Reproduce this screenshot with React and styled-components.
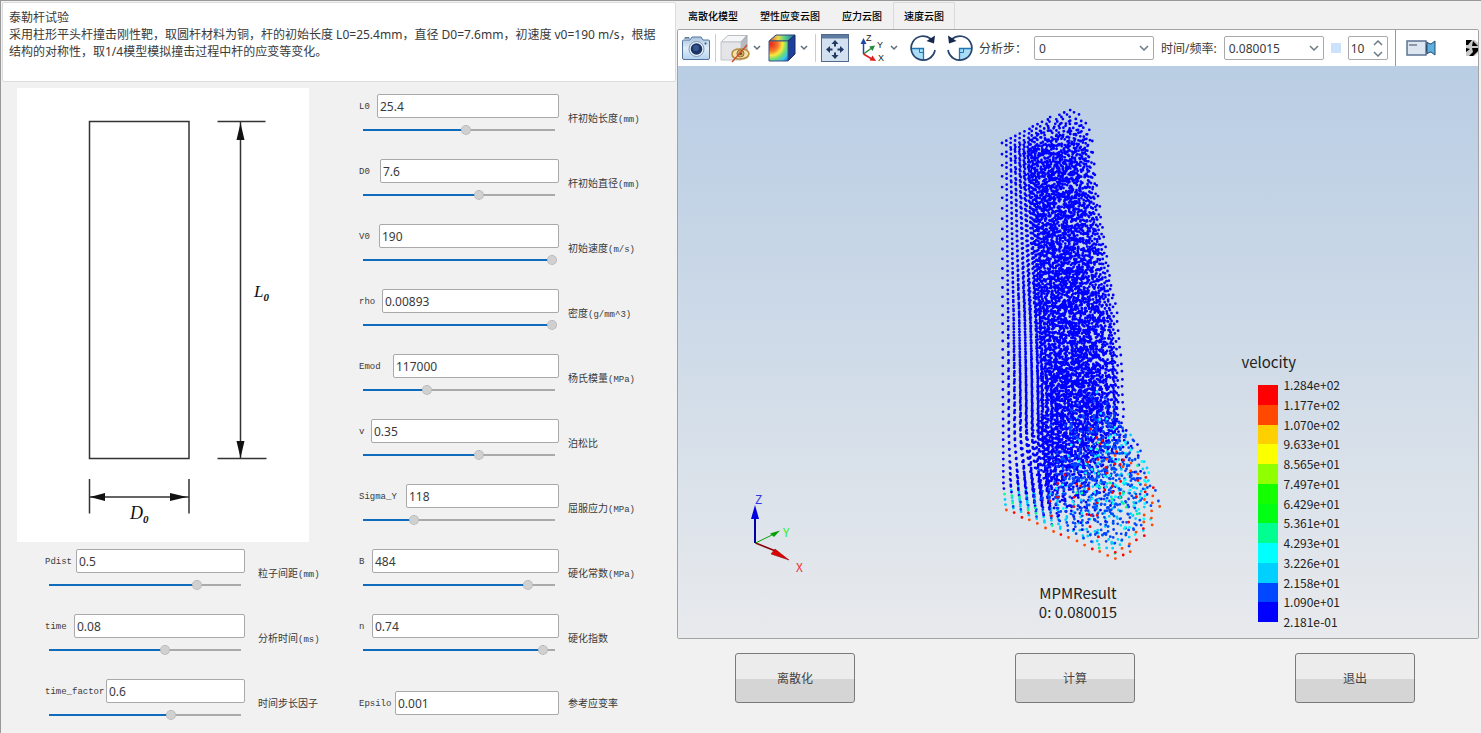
import React, { useMemo, useState } from "react";
import styled, { createGlobalStyle } from "styled-components";

const GlobalStyle = createGlobalStyle
`
    * {
        box-sizing: border-box;
    }

    body {
        margin: 0;
        background: #f1f1f1;
        color: #3a3a3a;
        font-family: 'Noto Sans', 'Noto Sans CJK SC', sans-serif;
        font-size: 12px;
    }

    button, input, select {
        font: inherit;
        color: inherit;
    }
`

const Page = styled.div
`
    display: flex;
    min-height: 100vh;
    border-top: 1px solid #999;
    border-left: 1px solid #999;
`

const Sidebar = styled.section
`
    flex: 0 0 676px;
`

const Intro = styled.div
`
    margin: 1px 1px 0;
    padding: 6px 16px 21px 6px;
    background: white;
    border: 1px solid #dcdcdc;
    border-radius: 2px;
`

const IntroText = styled.p
`
    margin: 0;
    line-height: 17px;
`

const Setup = styled.div
`
    display: grid;
    grid-template-columns: 342px 1fr;
    padding: 6px 0 0 16px;
`

const Sketch = styled.svg
`
    display: block;
    width: 292px;
    height: 454px;
    background: white;
`

const ParamList = styled.div
`
    display: flex;
    flex-direction: column;
    gap: 17px;
    padding: ${(props) => props.$inset ? "7px 0 0 28px" : "6px 0 0"};
`

const ParamRow = styled.div
`
    display: grid;
    grid-template-columns: 200px 1fr;
    align-items: center;
    column-gap: ${(props) => props.$wide ? 13 : 9}px;
    height: 48px;
`

const ParamInputs = styled.div
`
    display: flex;
    flex-direction: column;
`

const ParamLine = styled.div
`
    display: flex;
    align-items: center;
`

const ParamName = styled.label
`
    flex: none;
    width: ${(props) => props.$width}px;
    padding-top: 1px;
    font-family: 'Liberation Mono', monospace;
    font-size: 9px;
    line-height: 12px;
`

const ParamValue = styled.input
`
    flex: 1;
    min-width: 0;
    height: 24px;
    padding: 0 2px;
    background: white;
    border: 1px solid #a9a9a9;
    border-radius: 2px;
    outline: none;
`

const ParamSlider = styled.input
`
    appearance: none;
    height: 24px;
    margin: 0 2px;
    background:
        linear-gradient(to right, #0f6cbd var(--fill), #aaa var(--fill))
        center / calc(100% - 4px) 2px no-repeat;

    &::-webkit-slider-thumb {
        appearance: none;
        width: 10px;
        height: 10px;
        background: #d0d0d0;
        border: 1px dotted #aaa;
        border-radius: 50%;
    }
`

const ParamCaption = styled.span
`
    padding-top: 3px;
    font-family: 'Liberation Mono', 'Noto Sans CJK SC', monospace;
    font-size: 10px;
    line-height: 14px;
    white-space: nowrap;
`

const Unit = styled.small
`
    font-size: 9px;
`

const Main = styled.main
`
    flex: 1;
    min-width: 0;
    display: flex;
    flex-direction: column;
`

const Tabs = styled.nav
`
    display: flex;
    height: 28px;
    padding-top: 1px;
`

const Tab = styled.button
`
    padding: 0 11px;
    background: none;
    border: 1px solid ${(props) => props.$active ? "#dadada" : "transparent"};
    border-width: 1px 0 0;
    box-shadow: ${(props) => props.$active ? "inset 1px 0 #dadada, inset -1px 0 #dadada" : "none"};
    color: black;
    font-size: 10px;
    font-weight: 500;
    line-height: 14px;
`

const Viewer = styled.section
`
    flex: 1;
    display: flex;
    flex-direction: column;
    margin-right: 2px;
    border: 1px solid #a3a3a3;
    border-radius: 2px;
    overflow: hidden;
`

const Toolbar = styled.div
`
    display: flex;
    align-items: center;
    gap: 4px;
    height: 36px;
    padding-left: 3px;
    background: white;
    overflow: hidden;
`

const ToolGroup = styled.div
`
    display: flex;
    flex: none;
    align-items: center;
    gap: ${(props) => props.$gap}px;
`

const ToolButton = styled.button
`
    display: flex;
    flex: none;
    align-items: center;
    justify-content: center;
    width: 30px;
    height: 30px;
    padding: 0;
    background: none;
    border: none;

    svg {
        flex: none;
    }
`

const MenuButton = styled(ToolButton)
`
    width: 14px;
`

const ToolPair = styled.div
`
    display: flex;
`

const Separator = styled.span
`
    flex: none;
    width: 1px;
    height: ${(props) => props.$full ? 36 : 28}px;
    margin: ${(props) => props.$full ? "0 6px 0 3px" : "0"};
    background: ${(props) => props.$full ? "#999" : "#ccc"};
`

const ToolLabel = styled.label
`
    white-space: nowrap;
`

const SelectBox = styled.div
`
    position: relative;
    width: ${(props) => props.$width}px;
    height: 24px;

    svg {
        position: absolute;
        top: 9px;
        right: 5px;
        pointer-events: none;
    }
`

const Select = styled.select
`
    appearance: none;
    width: 100%;
    height: 24px;
    padding: 0 20px 0 4px;
    background: white;
    border: 1px solid #a9a9a9;
    border-radius: 2px;
`

const Swatch = styled.span
`
    width: 10px;
    height: 10px;
    background: #cce1fb;
`

const Spinner = styled.div
`
    display: flex;
    width: 40px;
    height: 24px;
    border: 1px solid #a9a9a9;
    border-radius: 2px;
`

const SpinnerValue = styled.input
`
    flex: 1;
    min-width: 0;
    padding: 0 0 0 2px;
    background: none;
    border: none;
    outline: none;
`

const SpinnerArrows = styled.div
`
    display: flex;
    flex-direction: column;
    width: 18px;
`

const SpinnerArrow = styled.button
`
    flex: 1;
    display: flex;
    align-items: center;
    justify-content: center;
    padding: 0;
    background: none;
    border: none;
`

const ClippedTool = styled(ToolButton)
`
    margin-left: auto;
    width: 13px;
    justify-content: flex-start;
`

const Viewport = styled.div
`
    position: relative;
    flex: 1;
    min-height: 400px;
    background: linear-gradient(#b9cde4, #cfdbe8 50%, #e8eaed);
    font-family: 'Noto Sans CJK SC', sans-serif;
    color: #222;
`

const Scene = styled.svg
`
    position: absolute;
    inset: 0;
    width: 100%;
    height: 100%;
`

const Triad = styled.svg
`
    position: absolute;
    left: 66px;
    bottom: 58px;
`

const Result = styled.p
`
    position: absolute;
    left: 0;
    right: 0;
    bottom: 17px;
    margin: 0;
    font-size: 15px;
    line-height: 19px;
    text-align: center;
`

const Legend = styled.div
`
    position: absolute;
    right: 138px;
    bottom: 6px;
`

const LegendTitle = styled.h2
`
    margin: 0 0 3px;
    font-size: 15px;
    font-weight: 400;
    line-height: 20px;
`

const LegendBody = styled.div
`
    display: flex;
    gap: 5px;
    padding-left: 17px;
`

const LegendBar = styled.div
`
    display: flex;
    flex-direction: column;
    width: 20px;
    height: 237px;
    margin: 10px 0;
`

const LegendColor = styled.span
`
    flex: 1;
    background: ${(props) => props.$color};
`

const LegendLabels = styled.div
`
    display: flex;
    flex-direction: column;
    justify-content: space-between;
    height: 253px;
    margin-top: 2px;
    font-size: 12px;
    line-height: 16px;
`

const Actions = styled.div
`
    display: flex;
    justify-content: space-between;
    padding: 14px 66px 30px 58px;
`

const ActionButton = styled.button
`
    width: 120px;
    height: 50px;
    background: linear-gradient(#ececec 52%, #d5d5d5 52%);
    border: 1px solid #7a7a7a;
    border-radius: 3px;
    color: #444;
`

const rodParams =
[
    { name: "L0", value: "25.4", label: 18, fill: 54, caption: "杆初始长度", unit: "(mm)" },
    { name: "D0", value: "7.6", label: 21, fill: 61, caption: "杆初始直径", unit: "(mm)" },
    { name: "V0", value: "190", label: 20, fill: 100, caption: "初始速度", unit: "(m/s)" },
    { name: "rho", value: "0.00893", label: 23, fill: 100, caption: "密度", unit: "(g/mm^3)" },
    { name: "Emod", value: "117000", label: 34, fill: 33, caption: "杨氏模量", unit: "(MPa)" },
    { name: "v", value: "0.35", label: 12, fill: 61, caption: "泊松比" },
    { name: "Sigma_Y", value: "118", label: 47, fill: 26, caption: "屈服应力", unit: "(MPa)" },
    { name: "B", value: "484", label: 13, fill: 87, caption: "硬化常数", unit: "(MPa)" },
    { name: "n", value: "0.74", label: 13, fill: 95, caption: "硬化指数" },
    { name: "Epsilo", value: "0.001", label: 36, caption: "参考应变率" },
];

const solverParams =
[
    { name: "Pdist", value: "0.5", label: 31, fill: 78, caption: "粒子间距", unit: "(mm)" },
    { name: "time", value: "0.08", label: 29, fill: 61, caption: "分析时间", unit: "(ms)" },
    { name: "time_factor", value: "0.6", label: 61, fill: 64, caption: "时间步长因子" },
];

const tabs = ["离散化模型", "塑性应变云图", "应力云图", "速度云图"];

const legendColors =
[
    "#ff0000", "#ff4800", "#ffd000", "#fbff00", "#90ff00", "#14ff00",
    "#00ff14", "#00ff90", "#00ffff", "#00d0ff", "#0048ff", "#0000ff",
];

const legendValues =
[
    "1.284e+02", "1.177e+02", "1.070e+02", "9.633e+01", "8.565e+01", "7.497e+01", "6.429e+01",
    "5.361e+01", "4.293e+01", "3.226e+01", "2.158e+01", "1.090e+01", "2.181e-01",
];

// Radial spread of the rod at a given height: [y, scale]
const profile =
[
    [77, 1], [109, 1.03], [162, 1.1], [182, 1.13], [222, 1.19], [249, 1.24], [284, 1.27],
    [314, 1.29], [356, 1.3], [374, 1.33], [386, 1.39], [396, 1.5], [410, 1.57], [442, 1.64],
];

function spreadAt(y)
{
    for (let i = 1; i < profile.length; i++)
    {
        const [y0, s0] = profile[i - 1];
        const [y1, s1] = profile[i];
        if (y <= y1) return s0 + (s1 - s0) * (y - y0) / (y1 - y0);
    }
    return profile[profile.length - 1][1];
}

function colorOf(depth, radius, front, random)
{
    if (depth === 0)
    {
        if (front || radius > 0.9) return random < 0.5 ? "#ff0000" : "#ff4800";
        if (random < 0.12) return "#ff0000";
        return random < 0.55 ? "#00d0ff" : "#0048ff";
    }
    if (depth < 4 && (front || radius < 0.2)) return random < 0.15 ? "#00ff90" : "#00d0ff";
    const heat = radius * 1.25 - depth * 0.06 - 0.25;
    if (random < heat * 0.05) return "#ff0000";
    if (random < heat * 0.1) return "#00ff90";
    if (random < heat * 0.28) return "#00ffff";
    if (random < heat * 0.6) return "#00d0ff";
    if (random < heat * 1.2 + (depth < 12 ? 0.25 : 0)) return "#0048ff";
    return "#0000ff";
}

// Quarter of the rod as a 15 x 15 grid of particles over 46 layers
function buildParticles()
{
    const paths = {};
    let seed = 7;
    const random = () =>
    {
        seed = (seed * 16807) % 2147483647;
        return seed / 2147483647;
    };

    for (let layer = 0; layer <= 45; layer++)
    {
        const depth = 45 - layer;
        const baseY = 77 + 11.3 * layer - 0.07 * layer * layer;
        const baseX = 324 + layer * 0.035 + (depth < 5 ? (5 - depth) * 0.5 : 0);
        const s = spreadAt(baseY);

        for (let i = 0; i < 15; i++)
        {
            for (let j = 0; j < 15; j++)
            {
                const radius = Math.sqrt(i * i + j * j) / 14.2;
                if (radius > 1) continue;

                const thin = depth > 0 && depth < 9 && radius > 0.45 && random() < 0.4;
                if (thin) continue;

                const edge = depth === 0 || radius > 0.93;
                const noise = edge ? 1 : Math.max(0, i + j - 5) * 0.7;
                // The core bulges towards the axis, the outer ring stays in place
                const crowd = Math.max(0, i + j - 6) * (1 - radius) * 2.2;
                const dx = 4.3 * i + (s - 1) * i * 0.9 + 4.3 * j + 0.04 * j * j - (depth < 5 ? 0 : crowd);
                const x = baseX + dx * (s > 1.3 ? s * 0.98 : s) + (random() - 0.5) * Math.min(noise, 6);
                const y = baseY + (2.15 * i - 2.35 * j) * s + (layer > 0 ? (random() - 0.5) * Math.min(noise * 1.6, 9) : 0);
                const color = colorOf(depth, radius, j === 0, random());
                paths[color] = (paths[color] || "") + `M${x.toFixed(1)} ${y.toFixed(1)}h.01`;
            }
        }
    }
    return Object.entries(paths);
}

const particleOrder = ["#00d0ff", "#0000ff", "#0048ff", "#00ffff", "#00ff90", "#ff4800", "#ff0000"];

function Particles()
{
    const paths = useMemo(() =>
        buildParticles().sort((a, b) => particleOrder.indexOf(a[0]) - particleOrder.indexOf(b[0])), []);

    return (
        <Scene viewBox="0 0 800 572" aria-label="velocity">
            {paths.map(([color, d]) =>
            (
                <path key={color} d={d} stroke={color} strokeWidth="2.8" strokeLinecap="round" fill="none"/>
            ))}
        </Scene>
    )
}

function Chevron({ up })
{
    return (
        <svg width="10" height="6" viewBox="0 0 10 6">
            <path d={up ? "M1 5L5 1L9 5" : "M1 1L5 5L9 1"} fill="none" stroke="#6b7c85" strokeWidth="1.5"/>
        </svg>
    )
}

function SmallChevron()
{
    return (
        <svg width="8" height="6" viewBox="0 0 8 6">
            <path d="M1 1L4 4L7 1" fill="none" stroke="#5c6f7c" strokeWidth="1.5"/>
        </svg>
    )
}

function CameraIcon()
{
    return (
        <svg width="28" height="24" viewBox="0 0 28 24">
            <defs>
                <linearGradient id="camera" x2="0" y2="1">
                    <stop offset="0" stopColor="#a9c2dd"/>
                    <stop offset="0.5" stopColor="#dfeefa"/>
                    <stop offset="1" stopColor="#b5d2ee"/>
                </linearGradient>
            </defs>
            <path d="M3 3V1.500H7V3" fill="#8fa8c4" stroke="#5d7a9e"/>
            <path d="M1.500 4H8L10 1H19L21 4H26.500Q27.500 4 27.500 5V22Q27.500 23.500 26 23.500H2Q.5 23.500 .5 22V5Q.5 4 1.500 4Z" fill="url(#camera)" stroke="#55749c"/>
            <circle cx="14.500" cy="13" r="7.500" fill="#eaf3fb" stroke="#7d98b8"/>
            <circle cx="14.500" cy="13" r="5.800" fill="#1c3566"/>
            <circle cx="14" cy="12" r="3" fill="#37588f"/>
            <circle cx="23.500" cy="7.500" r="1" fill="#33527e"/>
        </svg>
    )
}

function HiddenCubeIcon()
{
    return (
        <svg width="30" height="29" viewBox="0 0 30 29">
            <path d="M1 8L8 1.500H27L21 8Z" fill="#f5f6f7" stroke="#b9bec4"/>
            <path d="M21 8L27 1.500V19L21 26Z" fill="#b7bbc1" stroke="#a4a9b0"/>
            <path d="M1 8H21V26H1Z" fill="#e3e5e8" stroke="#c0c4c9"/>
            <path d="M12 20Q12 15 20 15Q29 15 29 20Q28 25 20 25Q12 25 12 20Z" fill="#f5dfaa" stroke="#b68a3c" strokeWidth="1.500"/>
            <circle cx="20.500" cy="19.500" r="3.500" fill="#d2ae64" stroke="#8c6a31"/>
            <circle cx="20.500" cy="19.500" r="1.500" fill="#5c4a30"/>
            <path d="M12 28L27 11" stroke="#cc4a2c" strokeWidth="1.300"/>
        </svg>
    )
}

function ContourCubeIcon()
{
    return (
        <svg width="28" height="28" viewBox="0 0 28 28">
            <defs>
                <radialGradient id="contour" gradientUnits="userSpaceOnUse" cx="3" cy="10" r="23">
                    <stop offset="0" stopColor="#e5281e"/>
                    <stop offset="0.3" stopColor="#f5762a"/>
                    <stop offset="0.5" stopColor="#f7ea3c"/>
                    <stop offset="0.68" stopColor="#69dc78"/>
                    <stop offset="0.85" stopColor="#38c5ee"/>
                    <stop offset="1" stopColor="#256be0"/>
                </radialGradient>
                <linearGradient id="contourTop">
                    <stop offset="0" stopColor="#d8412f"/>
                    <stop offset="0.35" stopColor="#e9dc4b"/>
                    <stop offset="0.65" stopColor="#49c88b"/>
                    <stop offset="1" stopColor="#2759b8"/>
                </linearGradient>
            </defs>
            <path d="M1 7L8 1H27L20 7Z" fill="url(#contourTop)" stroke="#29457a"/>
            <path d="M20 7L27 1V20L20 27Z" fill="#1d3f9e" stroke="#1b2c5c"/>
            <path d="M1 7H20V27H1Z" fill="url(#contour)" stroke="#3e5680"/>
        </svg>
    )
}

function FitIcon()
{
    return (
        <svg width="28" height="28" viewBox="0 0 28 28">
            <rect x="0.500" y="0.500" width="27" height="27" fill="#d3e0ef" stroke="#51698c"/>
            <path d="M1 1H27V4.500H1Z" fill="#5e7ba2"/>
            <path d="M14 6L17.500 10H15V12.500H13V10H10.500ZM14 25L10.500 21H13V18.500H15V21H17.500ZM5 15.500L9 12V14.500H11.500V16.500H9V19ZM23 15.500L19 19V16.500H16.500V14.500H19V12Z" fill="#1f3864"/>
        </svg>
    )
}

function AxesIcon()
{
    return (
        <svg width="26" height="30" viewBox="0 0 26 30" fontFamily="Liberation Sans, sans-serif" fontSize="9">
            <path d="M4.500 21V9" stroke="#1c48a8" strokeWidth="1.500"/>
            <path d="M4.500 5L7.500 11H1.500Z" fill="#1c48a8"/>
            <path d="M4.500 21L12 15.500" stroke="#218a3c" strokeWidth="1.500"/>
            <path d="M16 12.500L13.500 18L10.200 13.500Z" fill="#218a3c"/>
            <path d="M4.500 21L12 25.500" stroke="#e01e1e" strokeWidth="1.500"/>
            <path d="M17 28L10.500 27.500L13.500 22.500Z" fill="#e01e1e"/>
            <text x="7" y="8" fill="#222">Z</text>
            <text x="18" y="15" fill="#222">Y</text>
            <text x="19" y="28" fill="#222">X</text>
        </svg>
    )
}

function RotateIcon({ flipped })
{
    return (
        <svg width="28" height="28" viewBox="0 0 28 28">
            <g transform={flipped ? "translate(28 0) scale(-1 1)" : undefined}>
                <path d="M2 15H14V26.500Q4 26 2 15Z" fill="#a9dcf7"/>
                <path d="M2 14.500H14.500V26.500" fill="none" stroke="#1f78b4" strokeWidth="1.300"/>
                <path d="M10.500 15V18.500H14" fill="none" stroke="#1f78b4"/>
                <path d="M22 5A12 12 0 1 0 26 16" fill="none" stroke="#27456f" strokeWidth="1.700"/>
                <path d="M26 1.500L25 9.500L17.500 7Z" fill="#16294d"/>
            </g>
        </svg>
    )
}

function VideoIcon()
{
    return (
        <svg width="30" height="16" viewBox="0 0 30 16">
            <rect x="1" y="1" width="19" height="14" fill="#dce5f0" stroke="#5b7291" strokeWidth="1.500"/>
            <rect x="3" y="4" width="8" height="2" fill="#8c99aa"/>
            <path d="M20 4L23 6V10L20 12Z" fill="#33527e"/>
            <path d="M21 2Q23 4 25 4L29 1V15L25 12Q23 12 21 14Z" fill="#5fb0dc" stroke="#25486f"/>
        </svg>
    )
}

function ExportIcon()
{
    return (
        <svg width="24" height="18" viewBox="0 0 24 18">
            <path d="M1 1H10L13 4V14L10 17H1Z" fill="#c9c9c9"/>
            <path d="M1 1H7L3 6H1ZM8 2L13 7H7ZM1 9L5 10L1 13ZM7 9H13V12L8 17L4 17L8 13Z" fill="black"/>
        </svg>
    )
}

function RodSketch()
{
    return (
        <Sketch viewBox="0 0 292 454" fontFamily="Liberation Serif, serif" fontStyle="italic" fill="#111">
            <g fill="none" stroke="#333" strokeWidth="1.500">
                <rect x="72.500" y="33.500" width="99.500" height="337"/>
                <path d="M200.500 33.500H248.500M200.500 370.500H249.500M223.500 34V370"/>
                <path d="M72.500 391V425.500M172 391V425.500M73 409H172"/>
            </g>
            <path d="M223.500 35L227.500 52H219.500ZM223.500 370L219.500 353H227.500Z"/>
            <path d="M73 409L88 405V413ZM170 409L153 405V413Z"/>
            <text x="237" y="209" fontSize="17">L<tspan dy="4" fontSize="11" fontWeight="700">0</tspan></text>
            <text x="113" y="431" fontSize="18">D<tspan dy="4" fontSize="11" fontWeight="700">0</tspan></text>
        </Sketch>
    )
}

function AxisTriad()
{
    return (
        <Triad width="68" height="92" viewBox="0 -4 68 92" fontSize="12">
            <path d="M11.500 51L34 60" stroke="#8b0000" strokeWidth="1.500"/>
            <path d="M31 57L45 68L27 62Z" fill="#dd0000" stroke="#8b0000" strokeWidth="0.500"/>
            <path d="M11.500 51L28 43" stroke="#00a000"/>
            <path d="M36 38.500L30 45L26 41.500Z" fill="#00a000"/>
            <path d="M11 51V24" stroke="#0000a8" strokeWidth="2"/>
            <path d="M11 13L15 27H7Z" fill="#0000e0"/>
            <text x="11" y="12" fill="#3232e6">Z</text>
            <text x="39" y="45" fill="#28f028">Y</text>
            <text x="52" y="80" fill="#f03232">X</text>
        </Triad>
    )
}

function Param({ param, wide })
{
    const [value, setValue] = useState(param.value);
    const [fill, setFill] = useState(param.fill);
    const id = "param-" + param.name;

    return (
        <ParamRow $wide={wide}>
            <ParamInputs>
                <ParamLine>
                    <ParamName htmlFor={id} $width={param.label}>{param.name}</ParamName>
                    <ParamValue id={id} value={value} onChange={(e) => setValue(e.target.value)}/>
                </ParamLine>
                {fill !== undefined && (
                    <ParamSlider
                        type="range"
                        aria-label={param.caption}
                        value={fill}
                        onChange={(e) => setFill(Number(e.target.value))}
                        style={{ "--fill": fill + "%" }}
                    />
                )}
            </ParamInputs>
            <ParamCaption>{param.caption}{param.unit && <Unit>{param.unit}</Unit>}</ParamCaption>
        </ParamRow>
    )
}

export default function App()
{
    const [activeTab, setActiveTab] = useState("速度云图");
    const [count, setCount] = useState(10);

    return (
        <Page>
            <GlobalStyle/>
            <Sidebar>
                <Intro>
                    <IntroText>泰勒杆试验</IntroText>
                    <IntroText>
                        采用柱形平头杆撞击刚性靶，取圆杆材料为铜，杆的初始长度 L0=25.4mm，直径 D0=7.6mm，初速度 v0=190 m/s，根据结构的对称性，取1/4模型模拟撞击过程中杆的应变等变化。
                    </IntroText>
                </Intro>
                <Setup>
                    <div>
                        <RodSketch/>
                        <ParamList $inset>
                            {solverParams.map((param) => <Param key={param.name} param={param} wide/>)}
                        </ParamList>
                    </div>
                    <ParamList>
                        {rodParams.map((param) => <Param key={param.name} param={param}/>)}
                    </ParamList>
                </Setup>
            </Sidebar>

            <Main>
                <Tabs>
                    {tabs.map((tab) =>
                    (
                        <Tab key={tab} $active={tab === activeTab} onClick={() => setActiveTab(tab)}>{tab}</Tab>
                    ))}
                </Tabs>
                <Viewer>
                    <Toolbar>
                        <ToolButton aria-label="截图"><CameraIcon/></ToolButton>
                        <Separator/>
                        <ToolGroup $gap={3}>
                            <ToolPair>
                                <ToolButton aria-label="隐藏"><HiddenCubeIcon/></ToolButton>
                                <MenuButton aria-label="隐藏选项"><SmallChevron/></MenuButton>
                            </ToolPair>
                            <ToolPair>
                                <ToolButton aria-label="云图"><ContourCubeIcon/></ToolButton>
                                <MenuButton aria-label="云图选项"><SmallChevron/></MenuButton>
                            </ToolPair>
                        </ToolGroup>
                        <Separator/>
                        <ToolGroup $gap={7}>
                            <ToolButton aria-label="适应窗口"><FitIcon/></ToolButton>
                            <ToolPair>
                                <ToolButton aria-label="视角"><AxesIcon/></ToolButton>
                                <MenuButton aria-label="视角选项"><SmallChevron/></MenuButton>
                            </ToolPair>
                            <ToolButton aria-label="顺时针旋转"><RotateIcon/></ToolButton>
                            <ToolButton aria-label="逆时针旋转"><RotateIcon flipped/></ToolButton>
                        </ToolGroup>
                        <ToolGroup $gap={7}>
                            <ToolLabel htmlFor="step">分析步：</ToolLabel>
                            <SelectBox $width={120}>
                                <Select id="step"><option>0</option></Select>
                                <Chevron/>
                            </SelectBox>
                            <ToolLabel htmlFor="time-value">时间/频率:</ToolLabel>
                            <SelectBox $width={100}>
                                <Select id="time-value"><option>0.080015</option></Select>
                                <Chevron/>
                            </SelectBox>
                            <Swatch/>
                            <Spinner>
                                <SpinnerValue aria-label="帧数" value={count} onChange={(e) => setCount(Number(e.target.value) || 0)}/>
                                <SpinnerArrows>
                                    <SpinnerArrow aria-label="增加" onClick={() => setCount(count + 1)}><Chevron up/></SpinnerArrow>
                                    <SpinnerArrow aria-label="减少" onClick={() => setCount(count - 1)}><Chevron/></SpinnerArrow>
                                </SpinnerArrows>
                            </Spinner>
                        </ToolGroup>
                        <Separator $full/>
                        <ToolButton aria-label="录像"><VideoIcon/></ToolButton>
                        <ClippedTool aria-label="导出"><ExportIcon/></ClippedTool>
                    </Toolbar>
                    <Viewport>
                        <Particles/>
                        <AxisTriad/>
                        <Result>MPMResult<br/>0: 0.080015</Result>
                        <Legend>
                            <LegendTitle>velocity</LegendTitle>
                            <LegendBody>
                                <LegendBar>
                                    {legendColors.map((color) => <LegendColor key={color} $color={color}/>)}
                                </LegendBar>
                                <LegendLabels>
                                    {legendValues.map((value) => <span key={value}>{value}</span>)}
                                </LegendLabels>
                            </LegendBody>
                        </Legend>
                    </Viewport>
                </Viewer>
                <Actions>
                    <ActionButton>离散化</ActionButton>
                    <ActionButton>计算</ActionButton>
                    <ActionButton>退出</ActionButton>
                </Actions>
            </Main>
        </Page>
    )
}
